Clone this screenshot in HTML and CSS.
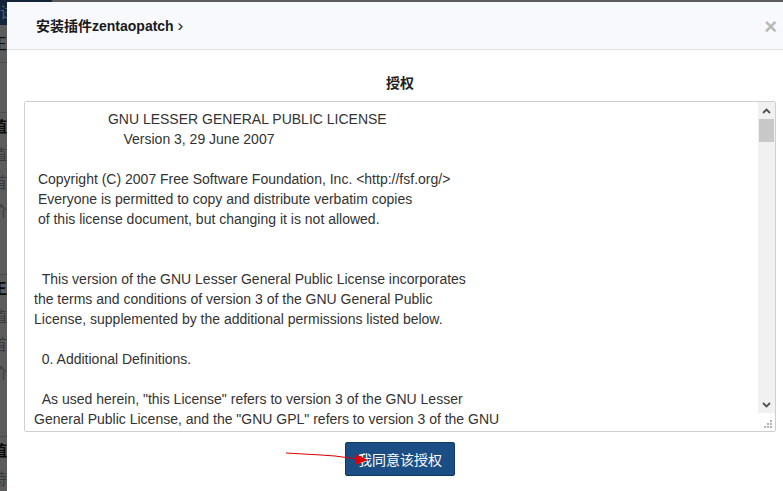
FILE: index.html
```html
<!DOCTYPE html>
<html>
<head>
    <meta charset='utf-8'>
    <title>安装插件</title>
    <link rel="stylesheet" href="styles.css">
</head>
<body>
    <!-- page behind the dialog, the dialog covers most of it -->
    <div class="page">
        <div class="pageTop">试用</div>
        <div class="pageRow dark">王五</div>
        <div class="pageGap"></div>
        <div class="pageRow bold">值班</div>
        <div class="pageRow">值班</div>
        <div class="pageRow">首页</div>
        <div class="pageRow">价格</div>
        <div class="pageGap"></div>
        <div class="pageRow bold">王五</div>
        <div class="pageRow">值班</div>
        <div class="pageRow">首页</div>
        <div class="pageRow">价格</div>
        <div class="pageGap"></div>
        <div class="pageRow bold">值班</div>
        <div class="pageRow">诗歌</div>
    </div>

    <div class="modal">
        <div class="modalHeader">
            <span class="modalTitle">安装插件zentaopatch <span class="chev">&#8250;</span></span>
            <span class="close">&times;</span>
        </div>
        <div class="modalBody">
            <h4 class="licenseTitle">授权</h4>
            <div class="licenseBox">
            <textarea class="license" readonly>                   GNU LESSER GENERAL PUBLIC LICENSE
                       Version 3, 29 June 2007

 Copyright (C) 2007 Free Software Foundation, Inc. &lt;http://fsf.org/&gt;
 Everyone is permitted to copy and distribute verbatim copies
 of this license document, but changing it is not allowed.


  This version of the GNU Lesser General Public License incorporates
the terms and conditions of version 3 of the GNU General Public
License, supplemented by the additional permissions listed below.

  0. Additional Definitions.

  As used herein, "this License" refers to version 3 of the GNU Lesser
General Public License, and the "GNU GPL" refers to version 3 of the GNU
General Public License.

  "The Library" refers to a covered work governed by this License,
other than an Application or a Combined Work as defined below.

  An "Application" is any work that makes use of an interface provided
by the Library, but which is not otherwise based on the Library.
Defining a subclass of a class defined by the Library is deemed a mode
of using an interface provided by the Library.

  A "Combined Work" is a work produced by combining or linking an
Application with the Library.  The particular version of the Library
with which the Combined Work was made is also called the "Linked
Version".

  1. Exception to Section 3 of the GNU GPL.

  You may convey a covered work under sections 3 and 4 of this License
without being bound by section 3 of the GNU GPL.

  2. Conveying Modified Versions.

  If you modify a copy of the Library, and, in your modifications, a
facility refers to a function or data to be supplied by an Application
that uses the facility (other than as an argument passed when the
facility is invoked), then you may convey a copy of the modified
version:

   a) under this License, provided that you make a good faith effort to
   ensure that, in the event an Application does not supply the
   function or data, the facility still operates, and performs
   whatever part of its purpose remains meaningful, or

   b) under the GNU GPL, with none of the additional permissions of
   this License applicable to that copy.
</textarea>
                <div class="scrollbar">
                    <div class="sbBtn">
                        <svg width="9" height="6" viewBox="0 0 9 6"><path d="M1 5 L4.5 1.5 L8 5" fill="none" stroke="#505050" stroke-width="1.8"/></svg>
                    </div>
                    <div class="sbTrack"><div class="sbThumb"></div></div>
                    <div class="sbBtn">
                        <svg width="9" height="6" viewBox="0 0 9 6"><path d="M1 1 L4.5 4.5 L8 1" fill="none" stroke="#505050" stroke-width="1.8"/></svg>
                    </div>
                    <div class="grip">
                        <svg width="8" height="8" viewBox="0 0 8 8" fill="#b5b5b5">
                            <rect x="6" y="0" width="2" height="2"/>
                            <rect x="3" y="3" width="2" height="2"/><rect x="6" y="3" width="2" height="2"/>
                            <rect x="0" y="6" width="2" height="2"/><rect x="3" y="6" width="2" height="2"/><rect x="6" y="6" width="2" height="2"/>
                        </svg>
                    </div>
                </div>
            </div>
            <div class="actions">
                <button class="agree">我同意该授权</button>
            </div>
        </div>
    </div>

    <!-- red arrow drawn over the screenshot -->
    <svg class="arrow" width="100" height="20" viewBox="0 0 100 20">
        <polyline points="1,4 36,6 50,7 72,10" fill="none" stroke="#e00000" stroke-width="1.2"/>
        <polygon points="70,5 83,11 70,16" fill="#e00000"/>
    </svg>
</body>
</html>
```

FILE: styles.css
```css
*{
    box-sizing: border-box;
}
body{
    margin: 0px;
    width: 783px;
    height: 491px;
    overflow: hidden;
    position: relative;
    background: #5c5c5c;
    font-family: "Liberation Sans", "Noto Sans CJK SC", sans-serif;
}
.page{
    margin-left: -8px;
    width: 60px;
    font-size: 15px;
    color: #3a3a3a;
    white-space: nowrap;
}
.pageTop{
    height: 25px;
    padding-left: 8px;
    background: #12233a;
    color: #51627a;
    line-height: 25px;
}
.pageRow{
    height: 28px;
    line-height: 28px;
}
.pageRow.dark{
    height: 38px;
    line-height: 38px;
    color: #111;
    border-bottom: 1px solid #4c4c4c;
}
.pageRow.bold{
    color: #0a0a0a;
    font-weight: bold;
}
.pageGap{
    height: 50px;
    border-bottom: 1px solid #4c4c4c;
}
.modal{
    position: absolute;
    left: 7px;
    top: 2px;
    width: 786px;
    height: 500px;
    background: #fff;
}
.modalHeader{
    height: 48px;
    display: flex;
    align-items: center;
    justify-content: space-between;
    padding: 0px 16px 0px 29px;
    background: #f8f9fd;
    border-bottom: 1px solid #e2e2e2;
}
.modalTitle{
    font-size: 14px;
    font-weight: bold;
    color: #1a1a1a;
}
.chev{
    font-size: 17px;
    font-weight: normal;
}
.close{
    font-size: 22px;
    font-weight: bold;
    color: #b8b8b8;
    line-height: 20px;
    margin-top: 2px;
}
.modalBody{
    padding: 23px 17px 0px 17px;
}
.licenseTitle{
    margin: 0px 0px 8px 0px;
    text-align: center;
    font-size: 14px;
    line-height: 20px;
    color: #222;
}
.licenseBox{
    display: flex;
    width: 752px;
    height: 331px;
    border: 1px solid #cfcfcf;
    border-radius: 2px;
    background: #fff;
}
.license{
    flex: 1;
    display: block;
    padding: 7px 9px 6px 9px;
    border: none;
    outline: none;
    font-family: "Liberation Sans", "Noto Sans CJK SC", sans-serif;
    font-size: 14px;
    line-height: 20px;
    color: #333;
    resize: none;
    overflow: hidden;
}
.scrollbar{
    width: 17px;
    display: flex;
    flex-direction: column;
}
.sbBtn{
    height: 17px;
    background: #f1f1f1;
    display: flex;
    align-items: center;
    justify-content: center;
}
.sbTrack{
    flex: 1;
    background: #f1f1f1;
    padding: 0px 1px;
}
.sbThumb{
    height: 23px;
    background: #c8c8c8;
}
.grip{
    height: 18px;
    display: flex;
    align-items: flex-end;
    justify-content: flex-end;
    padding: 0px 3px 3px 0px;
    background: #fff;
}
.actions{
    display: flex;
    justify-content: center;
    margin-top: 10px;
}
.agree{
    height: 34px;
    padding: 0px 12px;
    background: #1b4e85;
    border: 1px solid #113861;
    border-radius: 2px;
    color: #fff;
    font-size: 14px;
    font-family: "Liberation Sans", "Noto Sans CJK SC", sans-serif;
}
.arrow{
    position: absolute;
    left: 285px;
    top: 449px;
}
```
